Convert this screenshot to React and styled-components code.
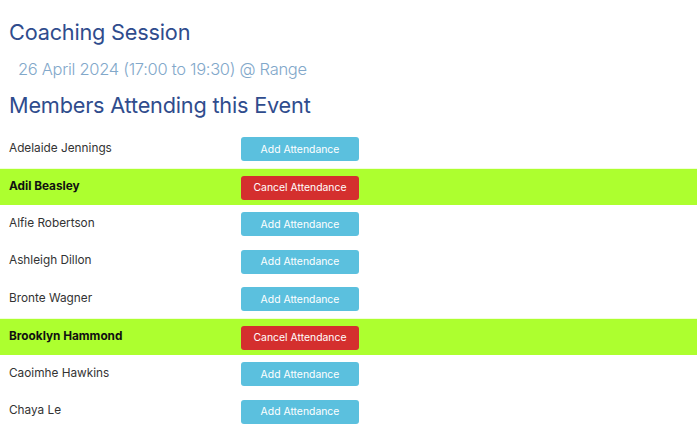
import React from 'react';
import styled, { createGlobalStyle } from 'styled-components';

const GlobalStyle = createGlobalStyle`
    body {
        margin: 0;
        background: #ffffff;
        font-family: 'Inter', 'Noto Sans', sans-serif;
    }
`;

const Page = styled.main`
    padding: 14px 0 0;
`;

const Title = styled.h1`
    margin: 0 9px;
    font-size: 21.7px;
    font-weight: 400;
    line-height: 36px;
    color: #2f4c8d;
    letter-spacing: -0.2px;
`;

const Subtitle = styled.h3`
    margin: 4px 18px 0;
    font-size: 16.5px;
    font-weight: 300;
    line-height: 30px;
    color: #82a8ca;
    letter-spacing: -0.3px;
`;

const SectionTitle = styled(Title)`
    margin-top: 3px;
`;

const Roster = styled.div`
    margin-top: 7px;
`;

const Row = styled.div`
    display: grid;
    grid-template-columns: 241px 118px 1fr;
    align-items: start;
    height: 37.5px;
    box-sizing: border-box;
    padding: 7px 0 0;
    background: ${(p) => (p.$attending ? '#adff2f' : 'transparent')};
    border-top: ${(p) => (p.$attending ? '1px solid #f0ffd8' : '0')};
`;

const Name = styled.span`
    padding: 1.5px 0 0 9px;
    font-size: 11.8px;
    line-height: 19px;
    font-weight: ${(p) => (p.$attending ? 700 : 400)};
    color: ${(p) => (p.$attending ? '#111' : '#333')};
`;

const AttendButton = styled.button`
    height: 24px;
    width: 118px;
    border: 0;
    border-radius: 3px;
    padding: 0;
    font-family: inherit;
    font-size: 10.4px;
    color: #fff;
    background: ${(p) => (p.$cancel ? '#d42f2e' : '#5bc0de')};
    cursor: pointer;
`;

const members = [
    { name: 'Adelaide Jennings', attending: false },
    { name: 'Adil Beasley', attending: true },
    { name: 'Alfie Robertson', attending: false },
    { name: 'Ashleigh Dillon', attending: false },
    { name: 'Bronte Wagner', attending: false },
    { name: 'Brooklyn Hammond', attending: true },
    { name: 'Caoimhe Hawkins', attending: false },
    { name: 'Chaya Le', attending: false },
];

function App() {
    return (
        <>
            <GlobalStyle />
            <Page>
                <Title>Coaching Session</Title>
                <Subtitle>26 April 2024 (17:00 to 19:30) @ Range</Subtitle>
                <SectionTitle>Members Attending this Event</SectionTitle>
                <Roster>
                    {members.map((m) => (
                        <Row key={m.name} $attending={m.attending}>
                            <Name $attending={m.attending}>{m.name}</Name>
                            <AttendButton $cancel={m.attending}>
                                {m.attending ? 'Cancel Attendance' : 'Add Attendance'}
                            </AttendButton>
                        </Row>
                    ))}
                </Roster>
            </Page>
        </>
    );
}

export default App;
